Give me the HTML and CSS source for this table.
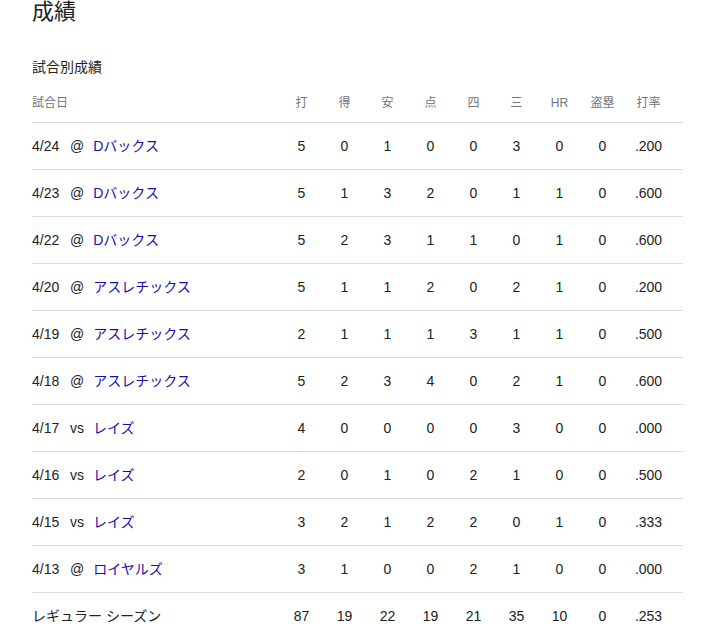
FILE: index.html
```html
<!DOCTYPE html>
<html lang="ja">
<head>
<meta charset="utf-8">
<title>成績</title>
<link rel="stylesheet" href="styles.css">
</head>
<body>
<h1 class="title">成績</h1>
<h2 class="subtitle">試合別成績</h2>
<div class="table">
  <div class="row head">
    <div class="first">試合日</div><div>打</div><div>得</div><div>安</div><div>点</div><div>四</div><div>三</div><div>HR</div><div>盗塁</div><div class="last">打率</div>
  </div>
  <div class="row"><div class="first"><span class="date">4/24</span><span class="at">@</span><a class="team" href="#">Dバックス</a></div><div>5</div><div>0</div><div>1</div><div>0</div><div>0</div><div>3</div><div>0</div><div>0</div><div class="last">.200</div></div>
  <div class="row"><div class="first"><span class="date">4/23</span><span class="at">@</span><a class="team" href="#">Dバックス</a></div><div>5</div><div>1</div><div>3</div><div>2</div><div>0</div><div>1</div><div>1</div><div>0</div><div class="last">.600</div></div>
  <div class="row"><div class="first"><span class="date">4/22</span><span class="at">@</span><a class="team" href="#">Dバックス</a></div><div>5</div><div>2</div><div>3</div><div>1</div><div>1</div><div>0</div><div>1</div><div>0</div><div class="last">.600</div></div>
  <div class="row"><div class="first"><span class="date">4/20</span><span class="at">@</span><a class="team" href="#">アスレチックス</a></div><div>5</div><div>1</div><div>1</div><div>2</div><div>0</div><div>2</div><div>1</div><div>0</div><div class="last">.200</div></div>
  <div class="row"><div class="first"><span class="date">4/19</span><span class="at">@</span><a class="team" href="#">アスレチックス</a></div><div>2</div><div>1</div><div>1</div><div>1</div><div>3</div><div>1</div><div>1</div><div>0</div><div class="last">.500</div></div>
  <div class="row"><div class="first"><span class="date">4/18</span><span class="at">@</span><a class="team" href="#">アスレチックス</a></div><div>5</div><div>2</div><div>3</div><div>4</div><div>0</div><div>2</div><div>1</div><div>0</div><div class="last">.600</div></div>
  <div class="row"><div class="first"><span class="date">4/17</span><span class="at">vs</span><a class="team" href="#">レイズ</a></div><div>4</div><div>0</div><div>0</div><div>0</div><div>0</div><div>3</div><div>0</div><div>0</div><div class="last">.000</div></div>
  <div class="row"><div class="first"><span class="date">4/16</span><span class="at">vs</span><a class="team" href="#">レイズ</a></div><div>2</div><div>0</div><div>1</div><div>0</div><div>2</div><div>1</div><div>0</div><div>0</div><div class="last">.500</div></div>
  <div class="row"><div class="first"><span class="date">4/15</span><span class="at">vs</span><a class="team" href="#">レイズ</a></div><div>3</div><div>2</div><div>1</div><div>2</div><div>2</div><div>0</div><div>1</div><div>0</div><div class="last">.333</div></div>
  <div class="row"><div class="first"><span class="date">4/13</span><span class="at">@</span><a class="team" href="#">ロイヤルズ</a></div><div>3</div><div>1</div><div>0</div><div>0</div><div>2</div><div>1</div><div>0</div><div>0</div><div class="last">.000</div></div>
  <div class="row total"><div class="first">レギュラー シーズン</div><div>87</div><div>19</div><div>22</div><div>19</div><div>21</div><div>35</div><div>10</div><div>0</div><div class="last">.253</div></div>
</div>
</body>
</html>
```

FILE: styles.css
```css
html, body {
  margin: 0;
  background: #fff;
}
body {
  padding: 0 30px 0 32px;
  font-family: "Liberation Sans", Arial, "Noto Sans CJK JP", sans-serif;
  color: #222;
  font-size: 14px;
}
.title {
  margin: 0;
  font-size: 22px;
  line-height: 24px;
  font-weight: normal;
  color: #222;
}
.subtitle {
  margin: 33px 0 0;
  font-size: 14px;
  line-height: 20px;
  font-weight: normal;
  color: #222;
}
.table {
  margin-top: 6px;
}
.row {
  display: grid;
  grid-template-columns: 1fr repeat(8, 43px) 59px;
  align-items: center;
  height: 46px;
  line-height: 20px;
  border-bottom: 1px solid #dadce0;
}
.row > div {
  text-align: center;
  white-space: nowrap;
}
.row > .first {
  text-align: left;
  display: flex;
  align-items: baseline;
}
.row > .last {
  padding-right: 10px;
}
.row.head {
  height: 39px;
  font-size: 12px;
  color: #70757a;
}
.row.total {
  border-bottom: none;
}
.date {
  width: 26px;
}
.at {
  margin-left: 12px;
}
.team {
  margin-left: 9px;
  color: #1a0dab;
  text-decoration: none;
}
```
